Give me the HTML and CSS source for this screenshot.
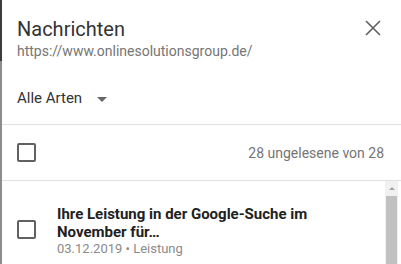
FILE: index.html
```html
<!DOCTYPE html>
<html lang="de">
<head>
    <meta charset="UTF-8">
    <meta name="viewport" content="width=device-width, initial-scale=1.0">
    <title>Nachrichten</title>
    <link rel="stylesheet" href="styles.css">
</head>
<body>
    <div class="panel">
        <div class="header">
            <div class="heading">
                <h1 class="title">Nachrichten</h1>
                <div class="url">https://www.onlinesolutionsgroup.de/</div>
            </div>
            <button class="close" aria-label="Schließen">
                <svg width="16" height="16" viewBox="0 0 16 16">
                    <path d="M1 1L15 15M15 1L1 15" stroke="#5f5f5f" stroke-width="1.6" fill="none"/>
                </svg>
            </button>
        </div>
        <div class="filter">
            <span>Alle Arten</span>
            <svg class="arrow" width="10" height="5" viewBox="0 0 10 5">
                <path d="M0 0L5 5L10 0Z" fill="#666"/>
            </svg>
        </div>
        <div class="select-row">
            <span class="checkbox"></span>
            <span class="count">28 ungelesene von 28</span>
        </div>
        <div class="list">
            <div class="items">
                <div class="item">
                    <span class="checkbox item-check"></span>
                    <div class="item-text">
                        <div class="item-title">Ihre Leistung in der Google-Suche im November für…</div>
                        <div class="item-meta">03.12.2019 • Leistung</div>
                    </div>
                </div>
            </div>
            <div class="scrollbar">
                <div class="scroll-up"></div>
                <div class="scroll-thumb"></div>
            </div>
        </div>
    </div>
</body>
</html>
```

FILE: styles.css
```css
body {
    margin: 0;
    font-family: Roboto, "Noto Sans", sans-serif;
    background: #fff;
    color: #333;
    overflow: hidden;
}
.panel {
    height: 264px;
    box-sizing: border-box;
    border-left: 2px solid #777;
    border-image: linear-gradient(#3c3c3c 62px, #8c8c8c 62px) 1;
    display: flex;
    flex-direction: column;
}
.header {
    display: flex;
    justify-content: space-between;
    align-items: flex-start;
    padding: 16px 20px 0 15px;
}
.title {
    margin: 0;
    font-size: 20px;
    line-height: 26px;
    font-weight: 400;
    color: #333;
}
.url {
    font-size: 14px;
    line-height: 18px;
    color: #757575;
}
.close {
    border: none;
    background: none;
    padding: 0;
    margin-top: 4px;
    width: 16px;
    height: 16px;
}
.close svg { display: block; }
.filter {
    display: flex;
    align-items: center;
    padding: 28px 15px 16px;
    font-size: 15px;
    line-height: 20px;
    color: #333;
    border-bottom: 1px solid #e0e0e0;
}
.arrow { margin-left: 15px; margin-top: 2px; }
.select-row {
    display: flex;
    align-items: center;
    justify-content: space-between;
    height: 55px;
    padding: 0 17px 0 15px;
    border-bottom: 1px solid #e0e0e0;
}
.checkbox {
    width: 19px;
    height: 19px;
    box-sizing: border-box;
    border: 2px solid #616161;
    border-radius: 2px;
    flex-shrink: 0;
}
.count {
    font-size: 14px;
    color: #757575;
}
.list {
    flex: 1;
    display: flex;
    overflow: hidden;
}
.items { flex: 1; }
.item {
    display: flex;
    align-items: flex-start;
    padding: 24px 0 0 15px;
}
.item-check { margin-top: 15px; margin-right: 21px; }
.item-title {
    font-size: 15px;
    line-height: 18px;
    font-weight: 700;
    color: #212121;
    width: 280px;
}
.item-meta {
    font-size: 13px;
    line-height: 16px;
    color: #8a8a8a;
}
.scrollbar {
    width: 13px;
    margin-right: 3px;
    background: #f1f1f1;
    display: flex;
    flex-direction: column;
}
.scroll-up {
    height: 15px;
    display: flex;
    justify-content: center;
    align-items: center;
}
.scroll-up::before {
    content: "";
    border-left: 3px solid transparent;
    border-right: 3px solid transparent;
    border-bottom: 3px solid #a3a3a3;
}
.scroll-thumb {
    flex: 1;
    margin: 0 1px;
    background: #c1c1c1;
}
```
